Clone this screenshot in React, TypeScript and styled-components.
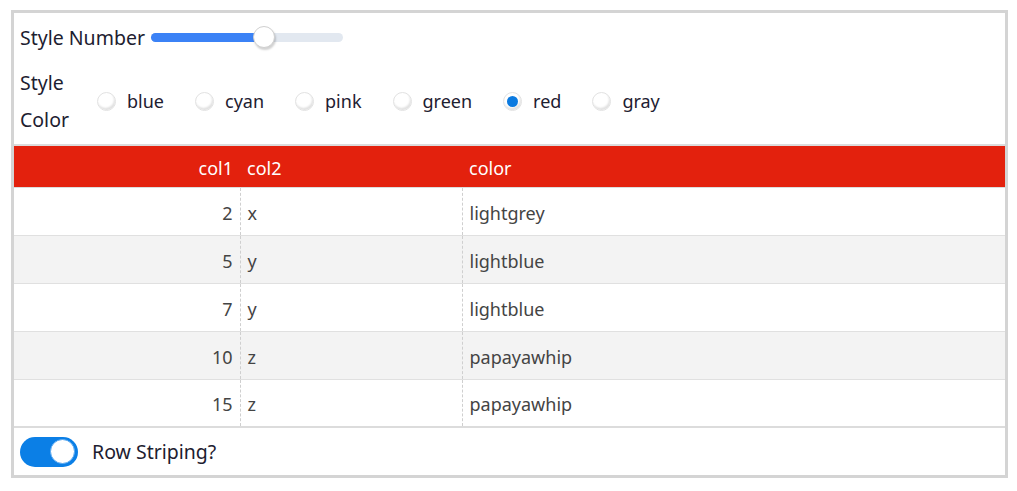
import React, { useState } from 'react';
import styled, { createGlobalStyle } from 'styled-components';

const GlobalStyle = createGlobalStyle`
  body {
    margin: 0;
    background: #ffffff;
    font-family: "Noto Sans", "Open Sans", sans-serif;
  }
  * { box-sizing: border-box; }
`

const rows = [
    { col1: 2, col2: 'x', color: 'lightgrey' },
    { col1: 5, col2: 'y', color: 'lightblue' },
    { col1: 7, col2: 'y', color: 'lightblue' },
    { col1: 10, col2: 'z', color: 'papayawhip' },
    { col1: 15, col2: 'z', color: 'papayawhip' },
]

const colors = ['blue', 'cyan', 'pink', 'green', 'red', 'gray']

const App = () => {
    const [styleColor, setStyleColor] = useState('red')
    const [striped, setStriped] = useState(true)
    const value = 59

    return (
        <>
            <GlobalStyle/>
            <Frame>
                <SliderRow>
                    <Label>Style Number</Label>
                    <Track>
                        <Fill style={{ width: `${value}%` }}/>
                        <Thumb style={{ left: `${value}%` }}/>
                    </Track>
                </SliderRow>
                <RadioRow>
                    <GroupLabel>Style Color</GroupLabel>
                    {colors.map(c => (
                        <Option key={c} onClick={() => setStyleColor(c)}>
                            <Radio $checked={c === styleColor}/>
                            <OptionText>{c}</OptionText>
                        </Option>
                    ))}
                </RadioRow>
                <Table>
                    <colgroup>
                        <col style={{ width: 226 }}/>
                        <col style={{ width: 222 }}/>
                        <col/>
                    </colgroup>
                    <thead>
                        <tr>
                            <Th $align="right">col1</Th>
                            <Th>col2</Th>
                            <Th>color</Th>
                        </tr>
                    </thead>
                    <tbody>
                        {rows.map((r, i) => (
                            <Tr key={i} $stripe={striped && i % 2 === 1}>
                                <Td $align="right">{r.col1}</Td>
                                <Td>{r.col2}</Td>
                                <Td>{r.color}</Td>
                            </Tr>
                        ))}
                    </tbody>
                </Table>
                <ToggleRow>
                    <Toggle $on={striped} onClick={() => setStriped(!striped)}>
                        <Knob $on={striped}/>
                    </Toggle>
                    <Label>Row Striping?</Label>
                </ToggleRow>
            </Frame>
        </>
    );
};

export default App

const Frame = styled.div`
  margin: 10px 0 0 11px;
  width: 997px;
  height: 468px;
  border: 3px solid #d4d4d4;
  display: flex;
  flex-direction: column;
`

const SliderRow = styled.div`
  display: flex;
  align-items: center;
  height: 48px;
  padding-left: 6px;
  gap: 6px;
`

const Label = styled.span`
  font-size: 19.5px;
  color: #1d2030;
`

const Track = styled.div`
  position: relative;
  width: 192px;
  height: 9px;
  border-radius: 5px;
  background: #e2e8f0;
`

const Fill = styled.div`
  height: 100%;
  border-radius: 5px;
  background: #3b82f6;
`

const Thumb = styled.div`
  position: absolute;
  top: 50%;
  width: 22px;
  height: 22px;
  border-radius: 50%;
  background: #ffffff;
  border: 1px solid #d0d0d0;
  box-shadow: 1px 2px 2px rgba(0, 0, 0, 0.18);
  transform: translate(-50%, -50%);
`

const RadioRow = styled.div`
  display: flex;
  align-items: center;
  height: 83px;
  padding: 0 0 3px 6px;
`

const GroupLabel = styled.span`
  width: 77px;
  font-size: 19.5px;
  line-height: 37px;
  color: #1d2030;
`

const Option = styled.label`
  display: flex;
  align-items: center;
  gap: 11px;
  margin-right: 31px;
  cursor: pointer;
`

const Radio = styled.span<{ $checked: boolean }>`
  position: relative;
  width: 19px;
  height: 19px;
  border-radius: 50%;
  background: #ffffff;
  border: 1px solid #e2e2e2;
  box-shadow: inset -1px -2px 2px rgba(0, 0, 0, 0.12);

  &::after {
    content: '';
    display: ${p => (p.$checked ? 'block' : 'none')};
    position: absolute;
    left: 3px;
    top: 3px;
    width: 11px;
    height: 11px;
    border-radius: 50%;
    background: #0b7ae0;
  }
`

const OptionText = styled.span`
  font-size: 18px;
  color: #1d2030;
`

const Table = styled.table`
  width: 100%;
  border-collapse: collapse;
  table-layout: fixed;
  border-top: 2px solid #dcdcdc;
  border-bottom: 2px solid #dcdcdc;
  font-size: 18px;
`

const Th = styled.th<{ $align?: string }>`
  height: 42px;
  padding: 3px 7px 0;
  background: #e3210d;
  color: #ffffff;
  font-weight: normal;
  text-align: ${p => p.$align || 'left'};
  border-bottom: 1px solid #dcdcdc;
`

const Tr = styled.tr<{ $stripe: boolean }>`
  background: ${p => (p.$stripe ? '#f3f3f3' : '#ffffff')};
  border-bottom: 1px solid #e0e0e0;

  &:last-child {
    border-bottom: none;
  }
`

const Td = styled.td<{ $align?: string }>`
  height: 48px;
  padding: 3px 7px 0;
  color: #444444;
  text-align: ${p => p.$align || 'left'};
  border-left: 1px dashed #cfcfcf;

  &:first-child {
    border-left: none;
  }
`

const ToggleRow = styled.div`
  display: flex;
  align-items: center;
  flex: 1;
  padding-left: 6px;
  gap: 14px;
`

const Toggle = styled.div<{ $on: boolean }>`
  display: flex;
  align-items: center;
  justify-content: ${p => (p.$on ? 'flex-end' : 'flex-start')};
  width: 58px;
  height: 30px;
  padding: 3px;
  border-radius: 15px;
  background: ${p => (p.$on ? '#0b7fe6' : '#cccccc')};
  cursor: pointer;
`

const Knob = styled.div<{ $on: boolean }>`
  width: 25px;
  height: 25px;
  border-radius: 50%;
  background: #ffffff;
  border: 1px solid ${p => (p.$on ? '#5aa8f0' : '#bbbbbb')};
`
